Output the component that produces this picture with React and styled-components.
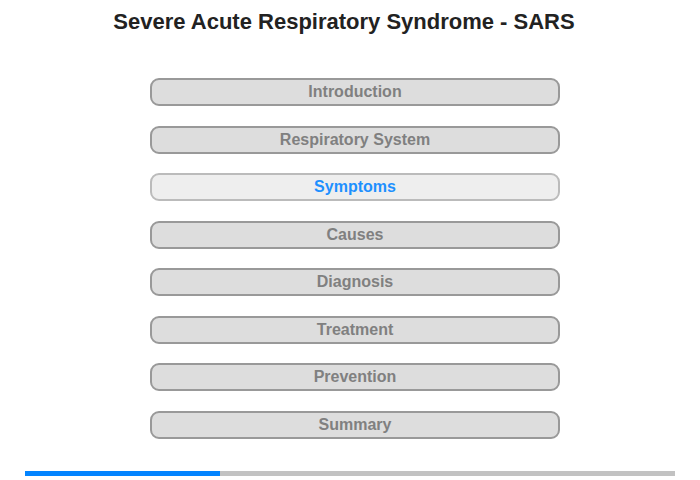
import React from 'react';
import styled, { createGlobalStyle } from 'styled-components';

const GlobalStyle = createGlobalStyle`
  body {
    margin: 0;
    background: #fff;
    font-family: "Liberation Sans", Arial, sans-serif;
  }
`;

const Page = styled.div`
  width: 700px;
  height: 480px;
  display: flex;
  flex-direction: column;
`;

const Title = styled.h1`
  margin: 9px 0 0;
  padding-right: 12px;
  height: 26px;
  line-height: 26px;
  font-size: 22px;
  font-weight: bold;
  color: #222;
  text-align: center;
`;

const Menu = styled.div`
  margin: 43px 0 0 150px;
  width: 410px;
  display: flex;
  flex-direction: column;
  gap: 19.5px;
`;

const MenuButton = styled.div`
  box-sizing: border-box;
  height: 28px;
  border: 2px solid ${p => (p.$active ? '#bbb' : '#999')};
  border-radius: 9px;
  background: ${p => (p.$active ? '#eee' : '#ddd')};
  color: ${p => (p.$active ? '#1e90ff' : '#808080')};
  font-size: 16px;
  font-weight: bold;
  display: flex;
  align-items: center;
  justify-content: center;
  cursor: pointer;
`;

const Progress = styled.div`
  margin: auto 0 4px 25px;
  width: 650px;
  height: 5px;
  background: #c2c2c2;
  display: flex;
`;

const ProgressFill = styled.div`
  height: 100%;
  background: #0384ff;
`;

const sections = [
  'Introduction',
  'Respiratory System',
  'Symptoms',
  'Causes',
  'Diagnosis',
  'Treatment',
  'Prevention',
  'Summary',
];

const App = () => {
  const current = 2;
  return (
    <Page>
      <GlobalStyle />
      <Title>Severe Acute Respiratory Syndrome - SARS</Title>
      <Menu>
        {sections.map((s, i) => (
          <MenuButton key={s} $active={i === current}>{s}</MenuButton>
        ))}
      </Menu>
      <Progress>
        <ProgressFill style={{ width: '30%' }} />
      </Progress>
    </Page>
  );
};

export default App;
